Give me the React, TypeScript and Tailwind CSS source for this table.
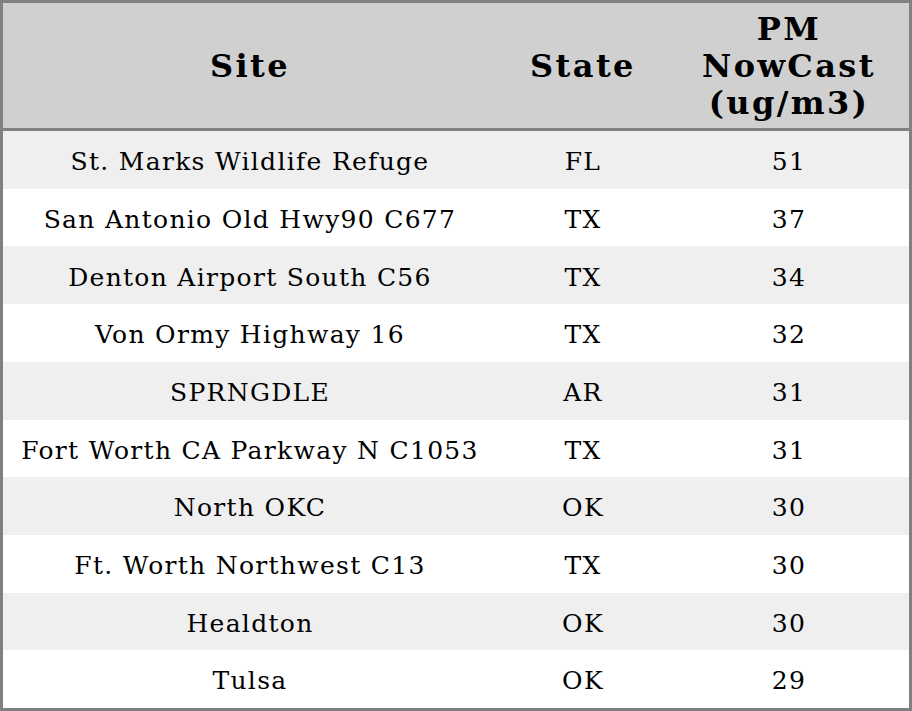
import React from 'react';

interface Reading {
  site: string;
  state: string;
  pm: number;
}

const readings: Reading[] = [
  { site: 'St. Marks Wildlife Refuge', state: 'FL', pm: 51 },
  { site: 'San Antonio Old Hwy90 C677', state: 'TX', pm: 37 },
  { site: 'Denton Airport South C56', state: 'TX', pm: 34 },
  { site: 'Von Ormy Highway 16', state: 'TX', pm: 32 },
  { site: 'SPRNGDLE', state: 'AR', pm: 31 },
  { site: 'Fort Worth CA Parkway N C1053', state: 'TX', pm: 31 },
  { site: 'North OKC', state: 'OK', pm: 30 },
  { site: 'Ft. Worth Northwest C13', state: 'TX', pm: 30 },
  { site: 'Healdton', state: 'OK', pm: 30 },
  { site: 'Tulsa', state: 'OK', pm: 29 },
];

const cols = 'grid grid-cols-[494px_172px_240px]';

const App: React.FC = () => {
  return (
    <div className="w-[912px] h-[711px] flex flex-col border-[3px] border-[#808080] bg-white text-black font-['DejaVu_Serif',serif]">
      {/* Header */}
      <div className={`${cols} h-[128px] shrink-0 pt-[2px] bg-[#d0d0d0] border-b-[3px] border-[#808080] text-[32px] font-bold leading-[37px] tracking-[2.4px] text-center`}>
        <div className="flex items-center justify-center">Site</div>
        <div className="flex items-center justify-center">State</div>
        <div className="flex items-center justify-center">
          PM
          <br />
          NowCast
          <br />
          (ug/m3)
        </div>
      </div>

      {/* Rows */}
      <div className="flex-1 flex flex-col">
        {readings.map((r, i) => (
          <div
            key={i}
            className={`${cols} flex-1 items-center pt-1 text-center text-[25px] tracking-[1.3px] ${i % 2 === 0 ? 'bg-[#efefef]' : 'bg-white'}`}
          >
            <div>{r.site}</div>
            <div>{r.state}</div>
            <div>{r.pm}</div>
          </div>
        ))}
      </div>
    </div>
  );
};

export default App;
